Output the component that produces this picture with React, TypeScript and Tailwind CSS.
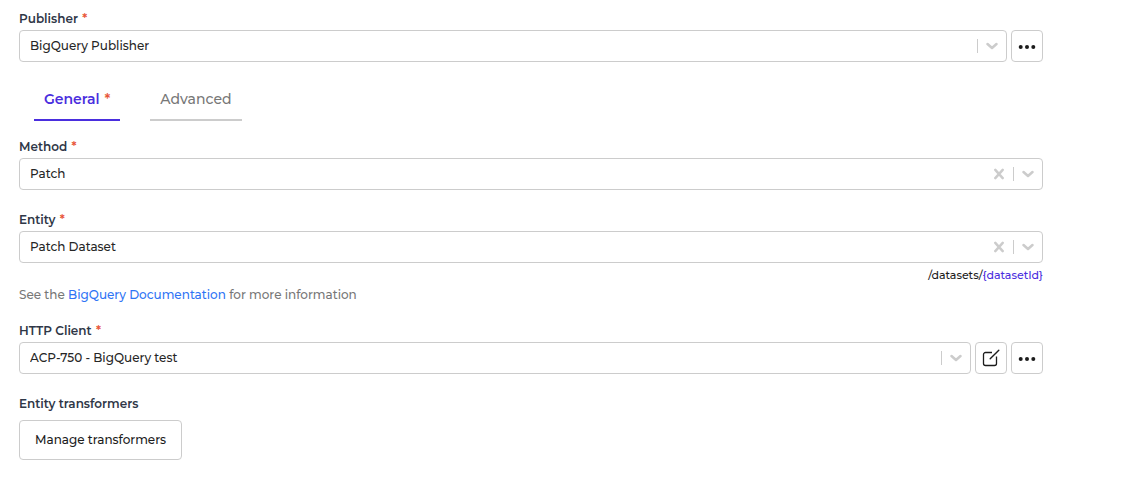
import { useId, useState, type ReactNode } from "react";

const TABS = [
  { id: "general", label: "General", required: true },
  { id: "advanced", label: "Advanced", required: false },
];

function Required() {
  return <span className="ml-px font-semibold text-[#e8563a]"> *</span>;
}

function ChevronIcon() {
  return (
    <svg width="12" height="8" viewBox="0 0 12 8" fill="none" aria-hidden="true">
      <path
        d="M1.500 2 6 6l4.500-4"
        stroke="currentColor"
        strokeWidth="2.500"
        strokeLinecap="round"
        strokeLinejoin="round"
      />
    </svg>
  );
}

function ClearIcon() {
  return (
    <svg width="10" height="12" viewBox="0 0 10 12" fill="none" aria-hidden="true">
      <path
        d="M1.300 1.900 8.700 10.100M8.700 1.900 1.300 10.100"
        stroke="currentColor"
        strokeWidth="2.500"
        strokeLinecap="round"
      />
    </svg>
  );
}

function DotsIcon() {
  return (
    <svg width="18" height="8" viewBox="0 0 18 8" fill="currentColor" aria-hidden="true">
      <circle cx="2.700" cy="5" r="2" />
      <circle cx="9" cy="5" r="2" />
      <circle cx="15.300" cy="5" r="2" />
    </svg>
  );
}

function EditIcon() {
  return (
    <svg width="18" height="18" viewBox="0 0 18 18" fill="none" aria-hidden="true">
      <path
        d="M10 3.500H3.500a2 2 0 0 0-2 2V14.500a2 2 0 0 0 2 2h9a2 2 0 0 0 2-2V7.500"
        stroke="currentColor"
        strokeWidth="1.300"
      />
      <path d="M8.200 9.800 16.800 1.200" stroke="currentColor" strokeWidth="1.400" strokeLinecap="round" />
    </svg>
  );
}

function IconButton({ label, children }: { label: string; children: ReactNode }) {
  return (
    <button
      type="button"
      aria-label={label}
      className="flex size-8 shrink-0 items-center justify-center rounded-[4px] border border-[#cccccc] bg-white text-[#1c1c1c] hover:border-gray-400"
    >
      {children}
    </button>
  );
}

function SelectField({
  label,
  option,
  clearable = false,
  actions,
}: {
  label: string;
  option: string;
  clearable?: boolean;
  actions?: ReactNode;
}) {
  const id = useId();
  const [value, setValue] = useState(option);

  return (
    <div className="flex flex-col">
      <label htmlFor={id} className="self-start text-[12px] leading-[22px] font-semibold text-[#2f3747]">
        {label}
        <Required />
      </label>
      <div className="flex gap-1">
        <div className="relative min-w-0 flex-1">
          <select
            id={id}
            value={value}
            onChange={(e) => setValue(e.target.value)}
            className="block h-8 w-full appearance-none rounded-[4px] border border-[#cccccc] bg-white pr-16 pl-2.5 text-[12px] font-medium text-[#262626]"
          >
            <option value="" />
            <option value={option}>{option}</option>
          </select>
          <div className="pointer-events-none absolute inset-y-0 right-0 flex items-center gap-2 pr-[9px] text-[#cccccc]">
            {clearable && (
              <button
                type="button"
                aria-label={`Clear ${label}`}
                onClick={() => setValue("")}
                className="pointer-events-auto pr-px"
              >
                <ClearIcon />
              </button>
            )}
            <span className="h-3.5 w-px bg-[#cccccc]" />
            <ChevronIcon />
          </div>
        </div>
        {actions}
      </div>
    </div>
  );
}

export default function App() {
  const [tab, setTab] = useState("general");

  return (
    <main className="min-h-screen bg-white px-[19px] py-2 font-[Montserrat,Inter,sans-serif] text-[12px]">
      <form className="max-w-5xl" onSubmit={(e) => e.preventDefault()}>
        <SelectField
          label="Publisher"
          option="BigQuery Publisher"
          actions={
            <IconButton label="Publisher options">
              <DotsIcon />
            </IconButton>
          }
        />

        <div role="tablist" className="mt-4 mb-[15px] flex gap-[30px] px-[15px]">
          {TABS.map(({ id, label, required }) => (
            <button
              key={id}
              type="button"
              role="tab"
              aria-selected={tab === id}
              onClick={() => setTab(id)}
              className={`h-[43px] border-b-2 px-2.5 text-[14px] leading-5 ${
                tab === id
                  ? "border-[#4a2ede] font-semibold text-[#4a2ede]"
                  : "border-[#cccccc] font-medium text-[#777777]"
              }`}
            >
              {label}
              {required && <Required />}
            </button>
          ))}
        </div>

        <div className="flex flex-col gap-[19px]">
          <SelectField label="Method" option="Patch" clearable />
          <SelectField label="Entity" option="Patch Dataset" clearable />
        </div>
        <p className="mt-1 text-right text-[11px] leading-4 font-medium text-[#1c1c1c]">
          /datasets/<span className="text-[#4a2ede]">{"{datasetId}"}</span>
        </p>
        <p className="mt-0.5 mb-[15px] leading-5 font-medium text-[#777777]">
          See the{" "}
          <a href="#docs" className="text-[#2f74f5] hover:underline">
            BigQuery Documentation
          </a>{" "}
          for more information
        </p>

        <SelectField
          label="HTTP Client"
          option="ACP-750 - BigQuery test"
          actions={
            <>
              <IconButton label="Edit HTTP client">
                <EditIcon />
              </IconButton>
              <IconButton label="HTTP client options">
                <DotsIcon />
              </IconButton>
            </>
          }
        />

        <section className="mt-5 flex flex-col items-start gap-1.5">
          <h2 className="leading-5 font-semibold text-[#2f3747]">Entity transformers</h2>
          <button
            type="button"
            className="h-10 rounded-[4px] border border-[#cccccc] bg-white px-[15px] text-[12px] font-medium text-[#1c1c1c] hover:border-gray-400"
          >
            Manage transformers
          </button>
        </section>
      </form>
    </main>
  );
}
